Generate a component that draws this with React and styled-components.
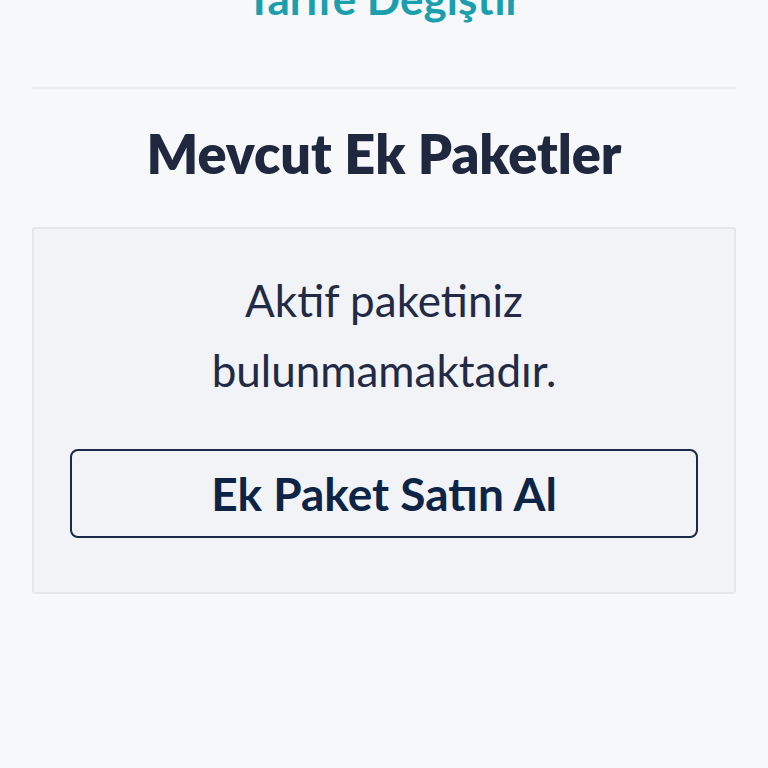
import React from 'react'
import styled, { createGlobalStyle } from 'styled-components'

const GlobalStyle = createGlobalStyle`
    html, body {
        margin: 0;
        padding: 0;
        background: #f7f8fa;
        font-family: Lato, "Noto Sans", sans-serif;
    }
`;

const App = () => {
    return (
        <Page>
            <GlobalStyle />
            <TariffLink>Tarife Değiştir</TariffLink>
            <Divider />
            <Heading>Mevcut Ek Paketler</Heading>
            <Card>
                <EmptyText>Aktif paketiniz<br />bulunmamaktadır.</EmptyText>
                <BuyButton>Ek Paket Satın Al</BuyButton>
            </Card>
        </Page>
    )
}

export default App

const Page = styled.div`
    padding: 0 32px;
    margin-top: -26px;
    display: flex;
    flex-direction: column;
`;

const TariffLink = styled.div`
    color: #1a9fad;
    font-size: 44px;
    font-weight: 700;
    line-height: 48px;
    text-align: center;
    margin-bottom: 65px;
`;

const Divider = styled.div`
    border-bottom: 2px solid #e6e8ec;
`;

const Heading = styled.h2`
    margin: 24px 0 0;
    color: #20283f;
    font-size: 54px;
    font-weight: 800;
    line-height: 82px;
    text-align: center;
`;

const Card = styled.div`
    margin-top: 32px;
    background: #f1f3f6;
    border: 2px solid #e4e6ea;
    border-radius: 3px;
    padding: 36px 36px 54px;
    display: flex;
    flex-direction: column;
    align-items: stretch;
`;

const EmptyText = styled.p`
    margin: 0;
    color: #222a45;
    font-size: 44px;
    line-height: 70px;
    text-align: center;
`;

const BuyButton = styled.button`
    margin-top: 44px;
    height: 89px;
    background: transparent;
    border: 2px solid #1b2a48;
    border-radius: 8px;
    color: #0d2447;
    font-family: inherit;
    font-size: 46px;
    font-weight: 700;
    cursor: pointer;
`;
